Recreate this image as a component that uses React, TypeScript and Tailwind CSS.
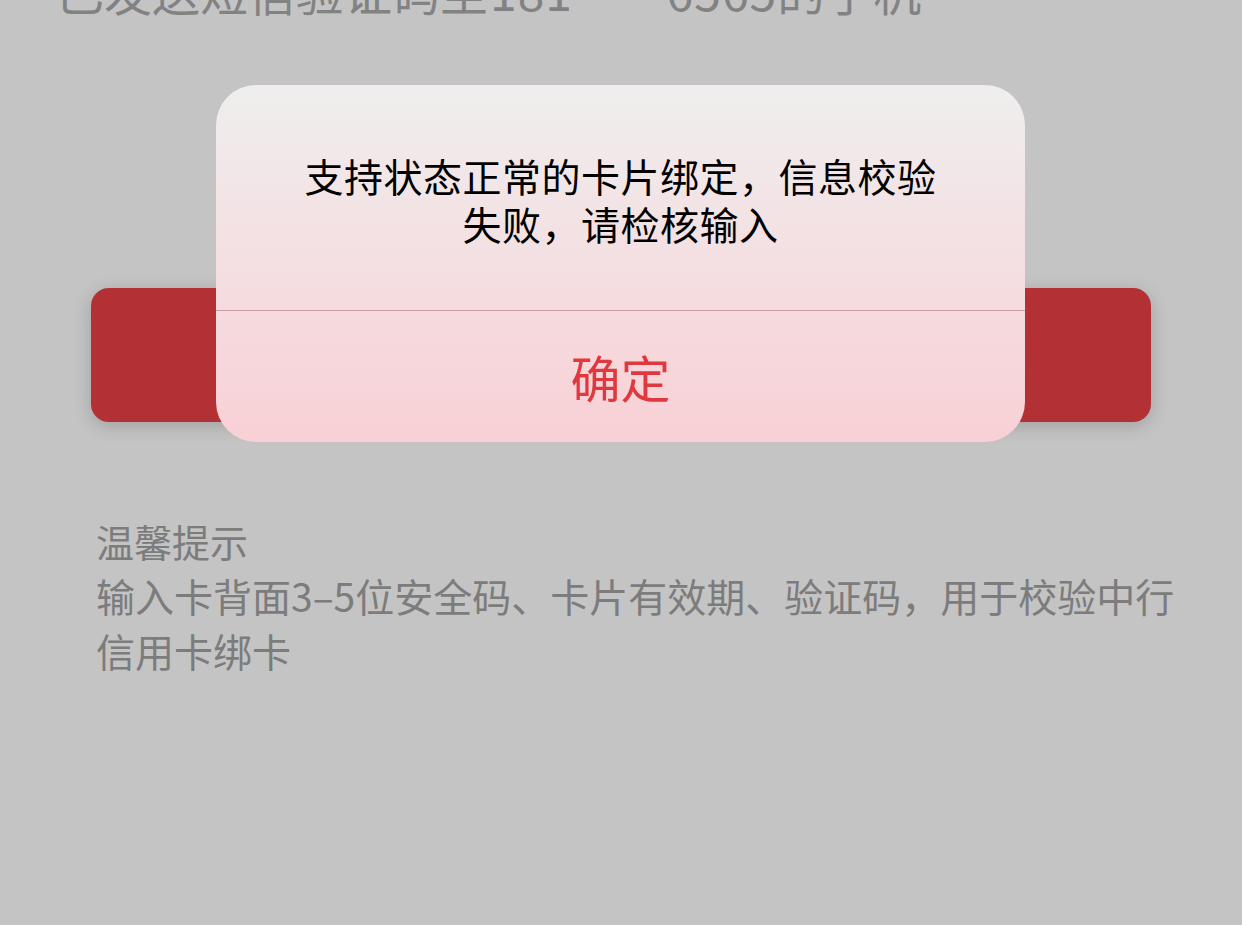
export default function App() {
  return (
    <div
      className="relative h-[925px] w-full overflow-hidden bg-[#c4c4c4]"
      style={{ fontFamily: '"Noto Sans CJK SC", "Noto Sans", sans-serif' }}
    >
      {/* sms hint, scrolled mostly out of view */}
      <div className="mt-[-34px] whitespace-nowrap pl-[56px] text-[48px] leading-[48px] text-[#828282]">
        已发送短信验证码至<span className="ml-[2px] tracking-[1px]">181****6565</span>的手机
      </div>

      {/* submit button */}
      <div className="mx-[91px] mt-[274px] h-[134px] rounded-[18px] bg-[#b33035] shadow-[0_4px_18px_rgba(0,0,0,0.18)]" />

      {/* tips */}
      <div className="mt-[91px] pl-[96px] pr-[56px] text-[#7c7c7c]">
        <div className="text-[38px] leading-[55px]">温馨提示</div>
        <div className="text-[39px] leading-[55px]">
          输入卡背面3–5位安全码、卡片有效期、验证码，用于校验中行信用卡绑卡
        </div>
      </div>

      {/* alert dialog */}
      <div className="absolute left-[216px] top-[85px] flex h-[357px] w-[809px] flex-col overflow-hidden rounded-[40px] bg-gradient-to-b from-[#efeeee] to-[#f8d0d5]">
        <div className="h-[225px] flex-none px-[80px] pt-[66px] text-center text-[39px] leading-[48px] tracking-[0.5px] text-black">
          支持状态正常的卡片绑定，信息校验失败，请检核输入
        </div>
        <div className="h-px flex-none bg-[#c99da3]" />
        <div className="flex flex-1 items-center justify-center text-[50px] text-[#e0383f]">
          确定
        </div>
      </div>
    </div>
  );
}
